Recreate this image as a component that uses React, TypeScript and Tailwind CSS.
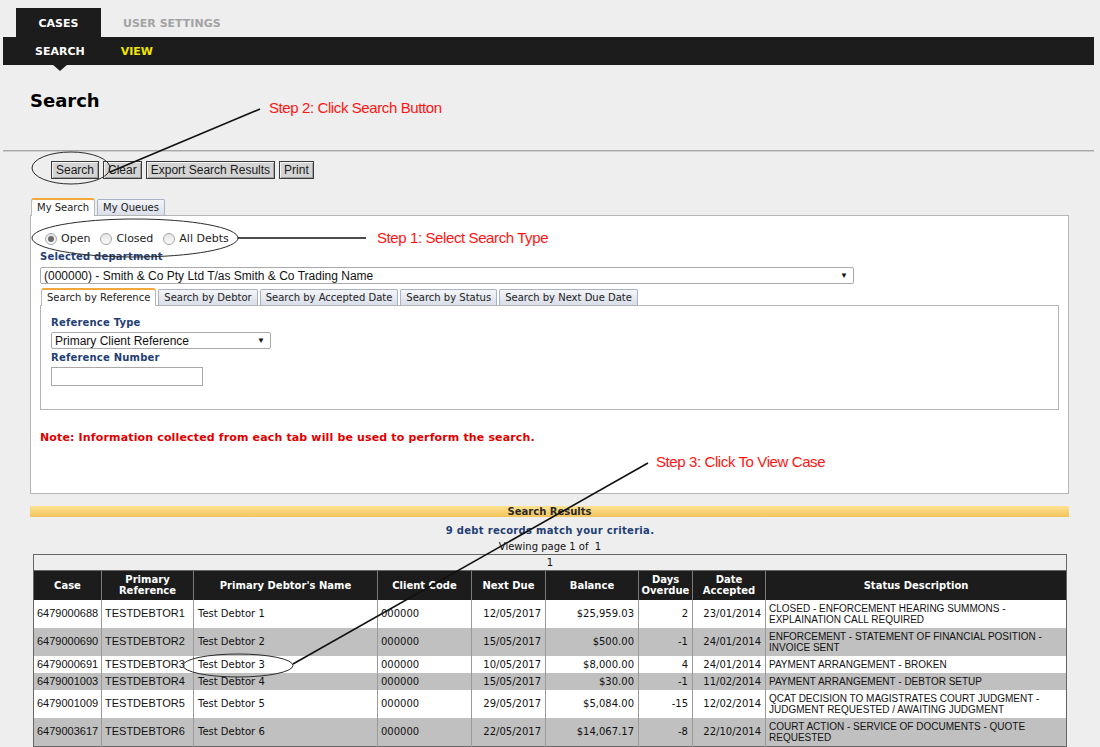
import React from "react";

const verdana = "font-['DejaVu_Sans',sans-serif]";
const arial = "font-['Liberation_Sans',Arial,sans-serif]";

type Row = {
  caseNo: string;
  ref: string;
  name: string;
  client: string;
  due: string;
  balance: string;
  days: string;
  accepted: string;
  status: string[];
};

const rows: Row[] = [
  {
    caseNo: "6479000688",
    ref: "TESTDEBTOR1",
    name: "Test Debtor 1",
    client: "000000",
    due: "12/05/2017",
    balance: "$25,959.03",
    days: "2",
    accepted: "23/01/2014",
    status: ["CLOSED - ENFORCEMENT HEARING SUMMONS -", "EXPLAINATION CALL REQUIRED"],
  },
  {
    caseNo: "6479000690",
    ref: "TESTDEBTOR2",
    name: "Test Debtor 2",
    client: "000000",
    due: "15/05/2017",
    balance: "$500.00",
    days: "-1",
    accepted: "24/01/2014",
    status: ["ENFORCEMENT - STATEMENT OF FINANCIAL POSITION -", "INVOICE SENT"],
  },
  {
    caseNo: "6479000691",
    ref: "TESTDEBTOR3",
    name: "Test Debtor 3",
    client: "000000",
    due: "10/05/2017",
    balance: "$8,000.00",
    days: "4",
    accepted: "24/01/2014",
    status: ["PAYMENT ARRANGEMENT - BROKEN"],
  },
  {
    caseNo: "6479001003",
    ref: "TESTDEBTOR4",
    name: "Test Debtor 4",
    client: "000000",
    due: "15/05/2017",
    balance: "$30.00",
    days: "-1",
    accepted: "11/02/2014",
    status: ["PAYMENT ARRANGEMENT - DEBTOR SETUP"],
  },
  {
    caseNo: "6479001009",
    ref: "TESTDEBTOR5",
    name: "Test Debtor 5",
    client: "000000",
    due: "29/05/2017",
    balance: "$5,084.00",
    days: "-15",
    accepted: "12/02/2014",
    status: ["QCAT DECISION TO MAGISTRATES COURT JUDGMENT -", "JUDGMENT REQUESTED / AWAITING JUDGMENT"],
  },
  {
    caseNo: "6479003617",
    ref: "TESTDEBTOR6",
    name: "Test Debtor 6",
    client: "000000",
    due: "22/05/2017",
    balance: "$14,067.17",
    days: "-8",
    accepted: "22/10/2014",
    status: ["COURT ACTION - SERVICE OF DOCUMENTS - QUOTE", "REQUESTED"],
  },
];

function Button({ label }: { label: string }) {
  return (
    <button
      className={`h-[18px] px-[4px] bg-[#d4d4d4] border border-[#3a3a3a] shadow-[inset_1px_1px_0_#f4f4f4,inset_-1px_-1px_0_#a0a0a0] text-[12px] leading-[14px] text-[#1a1a1a] ${arial}`}
    >
      {label}
    </button>
  );
}

function Tab({ label, active }: { label: string; active?: boolean }) {
  return active ? (
    <div className="h-[18px] px-[5px] bg-white border-x border-[#b9b9b9] border-t-2 border-t-[#f2a83a] rounded-t-[3px] text-[10px] leading-[15px] text-[#222] relative z-10 -mb-px">
      {label}
    </div>
  ) : (
    <div className="h-[16px] px-[5px] bg-gradient-to-b from-[#f3f5f9] to-[#d9dee8] border border-b-0 border-[#a9b2c4] rounded-t-[2px] text-[10px] leading-[15px] text-[#222]">
      {label}
    </div>
  );
}

function Radio({ label, checked }: { label: string; checked?: boolean }) {
  return (
    <div className="flex items-center">
      <span className="w-[12px] h-[12px] rounded-full border border-[#a6a6a6] bg-gradient-to-b from-[#e6e6e6] to-[#fafafa] flex items-center justify-center">
        {checked && <span className="w-[6px] h-[6px] rounded-full bg-[#6b6b6b]" />}
      </span>
      <span className="ml-[4px] text-[11px] text-[#222]">{label}</span>
    </div>
  );
}

function Label({ children }: { children: React.ReactNode }) {
  return <div className="text-[10px] leading-[12px] font-bold text-[#1f3e74] tracking-[0.2px]">{children}</div>;
}

function Select({ value, width }: { value: string; width: string }) {
  return (
    <div className={`${width} h-[17px] bg-white border border-[#a9a9a9] rounded-[2px] flex items-center justify-between pl-[3px] pr-[5px] ${arial}`}>
      <span className="text-[12px] text-[#111]">{value}</span>
      <span className="text-[8px] text-[#111]">▼</span>
    </div>
  );
}

const th = "border-l border-[#7a7a7a] first:border-l-0 text-white font-bold text-[10px] leading-[11px] text-center align-middle px-[2px]";
const td = "border-l border-[#9a9a9a] first:border-l-0 text-[10px] leading-[11px] text-[#111] py-[3px] align-middle whitespace-nowrap";
const step = "absolute text-[15px] leading-[20px] tracking-[-0.4px] text-[#ff1414] font-['Liberation_Sans',sans-serif] pointer-events-none";

export default function App() {
  return (
    <div className={`relative w-[1100px] h-[747px] overflow-hidden bg-[#eeeeee] ${verdana}`}>
      {/* main tabs */}
      <div className="h-[37px] pt-[8px] flex items-end">
        <div className="ml-[16px] w-[85px] h-[29px] pt-[3px] bg-[#1c1c1c] flex items-center justify-center text-white font-bold text-[11px]">
          CASES
        </div>
        <div className="ml-[22px] h-[29px] pt-[3px] flex items-center text-[#a3a3a3] font-bold text-[11px]">USER SETTINGS</div>
      </div>
      <div className="relative ml-[3px] w-[1091px] h-[28px] pt-[2px] bg-[#1c1c1c] flex items-center text-[11px] font-bold">
        <span className="ml-[32px] text-white">SEARCH</span>
        <span className="ml-[36px] text-[#f2e600]">VIEW</span>
        <span className="absolute left-[49px] top-[27px] w-0 h-0 border-x-[8px] border-x-transparent border-t-[7px] border-t-[#1c1c1c]" />
      </div>

      <h1 className="ml-[30px] mt-[25px] text-[18px] leading-[22px] font-bold text-black">Search</h1>

      <div className="ml-[3px] mt-[38px] w-[1091px] h-[2px] bg-[#a8a8a8] border-b border-[#cfcfcf]" />

      <div className="ml-[51px] mt-[9px] flex gap-[4px]">
        <Button label="Search" />
        <Button label="Clear" />
        <Button label="Export Search Results" />
        <Button label="Print" />
      </div>

      {/* search panel */}
      <div className="ml-[31px] mt-[19px] flex items-end gap-[2px]">
        <Tab label="My Search" active />
        <Tab label="My Queues" />
      </div>
      <div className="ml-[30px] w-[1039px] h-[279px] bg-white border border-[#b5b5b5] pl-[9px] pt-[15px]">
        <div className="flex items-center gap-[10px] h-[16px] ml-[5px]">
          <Radio label="Open" checked />
          <Radio label="Closed" />
          <Radio label="All Debts" />
        </div>
        <div className="mt-[4px]">
          <Label>Selected department</Label>
        </div>
        <div className="mt-[4px]">
          <Select value="(000000) - Smith & Co Pty Ltd T/as Smith & Co Trading Name" width="w-[814px]" />
        </div>
        <div className="mt-[4px] flex items-end gap-[2px] ml-px">
          <Tab label="Search by Reference" active />
          <Tab label="Search by Debtor" />
          <Tab label="Search by Accepted Date" />
          <Tab label="Search by Status" />
          <Tab label="Search by Next Due Date" />
        </div>
        <div className="w-[1019px] h-[105px] border border-[#b5b5b5] pl-[10px] pt-[11px]">
          <Label>Reference Type</Label>
          <div className="mt-[3px]">
            <Select value="Primary Client Reference" width="w-[220px]" />
          </div>
          <div className="mt-[3px]">
            <Label>Reference Number</Label>
          </div>
          <div className="mt-[3px] w-[152px] h-[19px] bg-white border border-[#a9a9a9]" />
        </div>
        <div className="mt-[20px] text-[11px] tracking-[0.15px] font-bold text-[#e10000]">
          Note: Information collected from each tab will be used to perform the search.
        </div>
      </div>

      {/* results */}
      <div className="ml-[30px] mt-[12px] w-[1039px] h-[11px] bg-gradient-to-b from-[#fde393] to-[#f3c35a] flex items-center justify-center text-[10px] font-bold text-[#2a2a2a]">
        Search Results
      </div>
      <div className="mt-[8px] w-[1100px] text-center text-[10px] leading-[12px] font-bold text-[#1f3e74] tracking-[0.3px]">
        9 debt records match your criteria.
      </div>
      <div className="mt-[4px] w-[1100px] text-center text-[10px] leading-[12px] text-[#111]">Viewing page 1 of&nbsp; 1</div>

      <table className="ml-[33px] mt-[1px] w-[1033px] border-collapse table-fixed border border-[#666]">
        <colgroup>
          <col className="w-[68px]" />
          <col className="w-[92px]" />
          <col className="w-[184px]" />
          <col className="w-[94px]" />
          <col className="w-[74px]" />
          <col className="w-[93px]" />
          <col className="w-[54px]" />
          <col className="w-[73px]" />
          <col className="w-[301px]" />
        </colgroup>
        <thead>
          <tr className="h-[16px] bg-[#eeeeee]">
            <td colSpan={9} className="text-center text-[10px] leading-[12px] text-[#111] border-b border-[#666]">
              1
            </td>
          </tr>
          <tr className="h-[29px] bg-[#1c1c1c]">
            <th className={th}>Case</th>
            <th className={th}>
              Primary
              <br />
              Reference
            </th>
            <th className={th}>Primary Debtor's Name</th>
            <th className={th}>Client Code</th>
            <th className={th}>Next Due</th>
            <th className={th}>Balance</th>
            <th className={th}>
              Days
              <br />
              Overdue
            </th>
            <th className={th}>
              Date
              <br />
              Accepted
            </th>
            <th className={th}>Status Description</th>
          </tr>
        </thead>
        <tbody>
          {rows.map((r, i) => (
            <tr key={r.caseNo} className={i % 2 === 0 ? "bg-white" : "bg-[#c0c0c0]"}>
              <td className={`${td} ${arial} text-[11px] pl-[3px]`}>{r.caseNo}</td>
              <td className={`${td} ${arial} text-[11px] pl-[3px]`}>{r.ref}</td>
              <td className={`${td} pl-[4px]`}>{r.name}</td>
              <td className={`${td} pl-[3px]`}>{r.client}</td>
              <td className={`${td} text-right pr-[4px]`}>{r.due}</td>
              <td className={`${td} text-right pr-[4px]`}>{r.balance}</td>
              <td className={`${td} text-right pr-[4px]`}>{r.days}</td>
              <td className={`${td} text-right pr-[4px]`}>{r.accepted}</td>
              <td className={`${td} ${arial} text-[10.2px] pl-[3px]`}>
                {r.status.map((s) => (
                  <div key={s}>{s}</div>
                ))}
              </td>
            </tr>
          ))}
        </tbody>
      </table>

      {/* tutorial annotations drawn over the page */}
      <svg className="absolute inset-0 pointer-events-none" width="1100" height="747" viewBox="0 0 1100 747">
        <g fill="none" stroke="#2b2b2b">
          <ellipse cx="71" cy="168" rx="39" ry="16" strokeWidth="1" />
          <ellipse cx="135" cy="238" rx="103" ry="19" strokeWidth="1" />
          <ellipse cx="238" cy="665.5" rx="55" ry="11.5" strokeWidth="1" />
        </g>
        <g stroke="#111" strokeWidth="1.6">
          <line x1="260" y1="109" x2="110" y2="172" />
          <line x1="238" y1="238" x2="366" y2="238" />
          <line x1="293" y1="664" x2="648" y2="463" />
        </g>
      </svg>
      <div className={`${step} left-[269px] top-[98px]`}>Step 2: Click Search Button</div>
      <div className={`${step} left-[377px] top-[228px]`}>Step 1: Select Search Type</div>
      <div className={`${step} left-[656px] top-[452px]`}>Step 3: Click To View Case</div>
    </div>
  );
}
